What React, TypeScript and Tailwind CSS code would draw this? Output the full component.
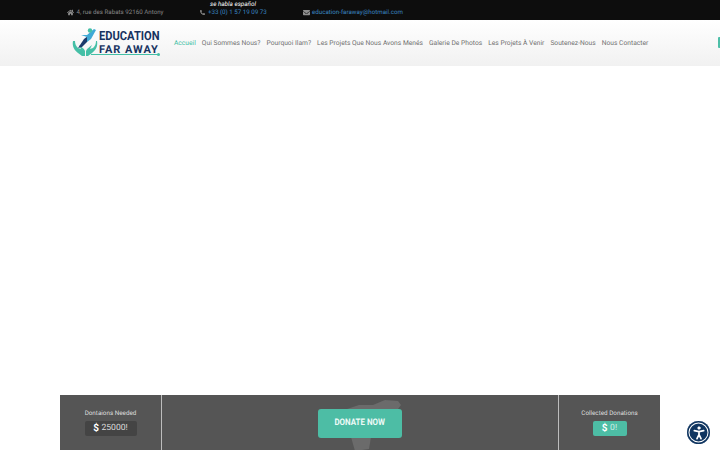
import { FaEnvelope, FaHome, FaPhoneAlt } from "react-icons/fa";

const navItems = [
  "Qui Sommes Nous?",
  "Pourquoi Ilam?",
  "Les Projets Que Nous Avons Menés",
  "Galerie De Photos",
  "Les Projets À Venir",
  "Soutenez-Nous",
  "Nous Contacter",
];

function Logo() {
  return (
    <div className="relative h-[32px] w-[88px]">
      <svg viewBox="0 0 28 30" className="absolute left-0 top-0 h-[30px] w-[28px]">
        {/* hands */}
        <path d="M1 14 C0 19 2 23 6 26 L10 29 L13 29 L13 24 C12 21 9 20 7 18 L9 22 L6 21 C4 19 3 17 3 14 Z" fill="#45bfa6" />
        <path d="M25 14 C26 19 24 23 20 26 L16 29 L14 29 L14 24 C15 21 18 20 20 18 L18 22 L21 21 C23 19 24 17 24 14 Z" fill="#45bfa6" />
        {/* figure */}
        <path d="M6 21 L12 12 L16 9 L15 15 L10 20 Z" fill="#1b3a6b" />
        <path d="M9 8 L15 8 L22 2 L24 3 L19 12 L15 15 L15 10 Z" fill="#3fa9d6" />
        <circle cx="18" cy="3.5" r="2.2" fill="#45bfa6" />
      </svg>
      <div className="absolute left-[27px] top-[3.5px] origin-left scale-x-[0.89] text-[12.5px] leading-[11px] font-bold whitespace-nowrap text-[#16325f]">
        EDUCATION
      </div>
      <div className="absolute left-[27px] top-[17px] text-[11px] leading-[11px] font-bold tracking-[0.95px] whitespace-nowrap text-[#16325f]">
        FAR AWAY
      </div>
      <div className="absolute left-[19px] top-[27px] h-[1px] w-[67px] bg-[#45bfa6]" />
      <div className="absolute left-[85px] top-[26px] h-[3px] w-[3px] rounded-full bg-[#45bfa6]" />
    </div>
  );
}

function MapShape() {
  return (
    <svg viewBox="0 0 60 55" className="absolute left-[183px] top-[4px] h-[55px] w-[60px]">
      <path
        d="M2 10 L14 6 L28 6 L40 1 L53 2 L56 6 L50 14 L40 30 L26 38 L24 50 L10 52 L6 38 L8 24 Z"
        fill="#6b6b6b"
      />
    </svg>
  );
}

export default function App() {
  return (
    <div className="relative flex h-[450px] w-[720px] flex-col overflow-hidden bg-white font-['Roboto',sans-serif] [text-rendering:geometricPrecision]">
      {/* top bar */}
      <div className="relative flex h-5 items-center bg-[#0d0d0d] pt-[6px] pl-[67px] text-[6.2px]">
        <div className="flex w-[133px] items-center gap-[2.5px] text-[#858585]">
          <FaHome className="text-[7px] text-[#8f8f8f]" />
          <span>4, rue des Rabats 92160 Antony</span>
        </div>
        <div className="flex w-[103px] items-center gap-[3px] text-[#3a86c0]">
          <FaPhoneAlt className="text-[5px] text-[#8f8f8f]" />
          <span>+33 (0) 1 57 19 09 73</span>
        </div>
        <div className="flex items-center gap-[2px] text-[#3a86c0]">
          <FaEnvelope className="text-[7px] text-[#8f8f8f]" />
          <span>education-faraway@hotmail.com</span>
        </div>
        <span className="absolute left-[210px] top-0 text-[6.3px] leading-[8px] italic text-white">
          se habla español
        </span>
      </div>

      {/* header */}
      <div className="flex h-[46px] items-center bg-gradient-to-b from-white to-[#f1f1f1] pl-[72px]">
        <Logo />
        <nav className="ml-[14px] flex items-center gap-[6px] text-[6.7px] text-[#707070]">
          <span className="text-[#45bfa6]">Accueil</span>
          {navItems.map((item) => (
            <span key={item} className="whitespace-nowrap">
              {item}
            </span>
          ))}
        </nav>
        <div className="absolute right-0 top-[37px] h-[11px] w-[2px] rounded-l-[1px] bg-[#4dbfa8]" />
      </div>

      <div className="flex-1" />

      {/* donation bar */}
      <div className="mx-[60px] flex h-[55px] bg-[#555555] text-white">
        <div className="flex w-[101px] flex-col items-center pt-[14px]">
          <span className="text-[6.3px] leading-[8px] text-[#dedede]">Dontaions Needed</span>
          <div className="mt-[4px] flex h-[15px] w-[52px] items-center justify-center gap-[2.5px] rounded-[2px] bg-[#444444] text-[8.6px]">
            <b className="text-[10px]">$</b>
            <span className="text-[#dcdcdc]">25000!</span>
          </div>
        </div>
        <div className="relative flex flex-1 justify-center border-x border-[#bdbdbd] pt-[14px]">
          <MapShape />
          <div className="relative flex h-[29px] w-[84px] items-center justify-center rounded-[3px] bg-[#4dbda5] text-[9px] font-bold text-[#eefaf7]">
            <span className="inline-block scale-x-[0.88]">DONATE NOW</span>
          </div>
        </div>
        <div className="flex w-[101px] flex-col items-center pt-[14px]">
          <span className="text-[6.3px] leading-[8px] text-[#dedede]">Collected Donations</span>
          <div className="mt-[4px] flex h-[15px] w-[34px] items-center justify-center gap-[2.5px] rounded-[2px] bg-[#4dbda5] text-[8.6px]">
            <b className="text-[10px]">$</b>
            <span className="text-[#cdeee6]">0!</span>
          </div>
        </div>
      </div>

      {/* accessibility button */}
      <div className="absolute left-[687px] top-[421px] flex h-[23px] w-[23px] items-center justify-center rounded-full bg-[#0f3560] shadow-[inset_0_0_0_1.5px_#0f3560,inset_0_0_0_2.5px_white]">
        <svg viewBox="0 0 24 24" className="h-[16px] w-[16px]" fill="none" stroke="white" strokeWidth="2.6" strokeLinecap="round" strokeLinejoin="round">
          <circle cx="12" cy="4.5" r="1.9" fill="white" strokeWidth="1" />
          <path d="M5 8.5 L12 9.8 L19 8.5 M12 9.8 V14.5 M12 14.5 L9 20.5 M12 14.5 L15 20.5" />
        </svg>
      </div>
    </div>
  );
}
